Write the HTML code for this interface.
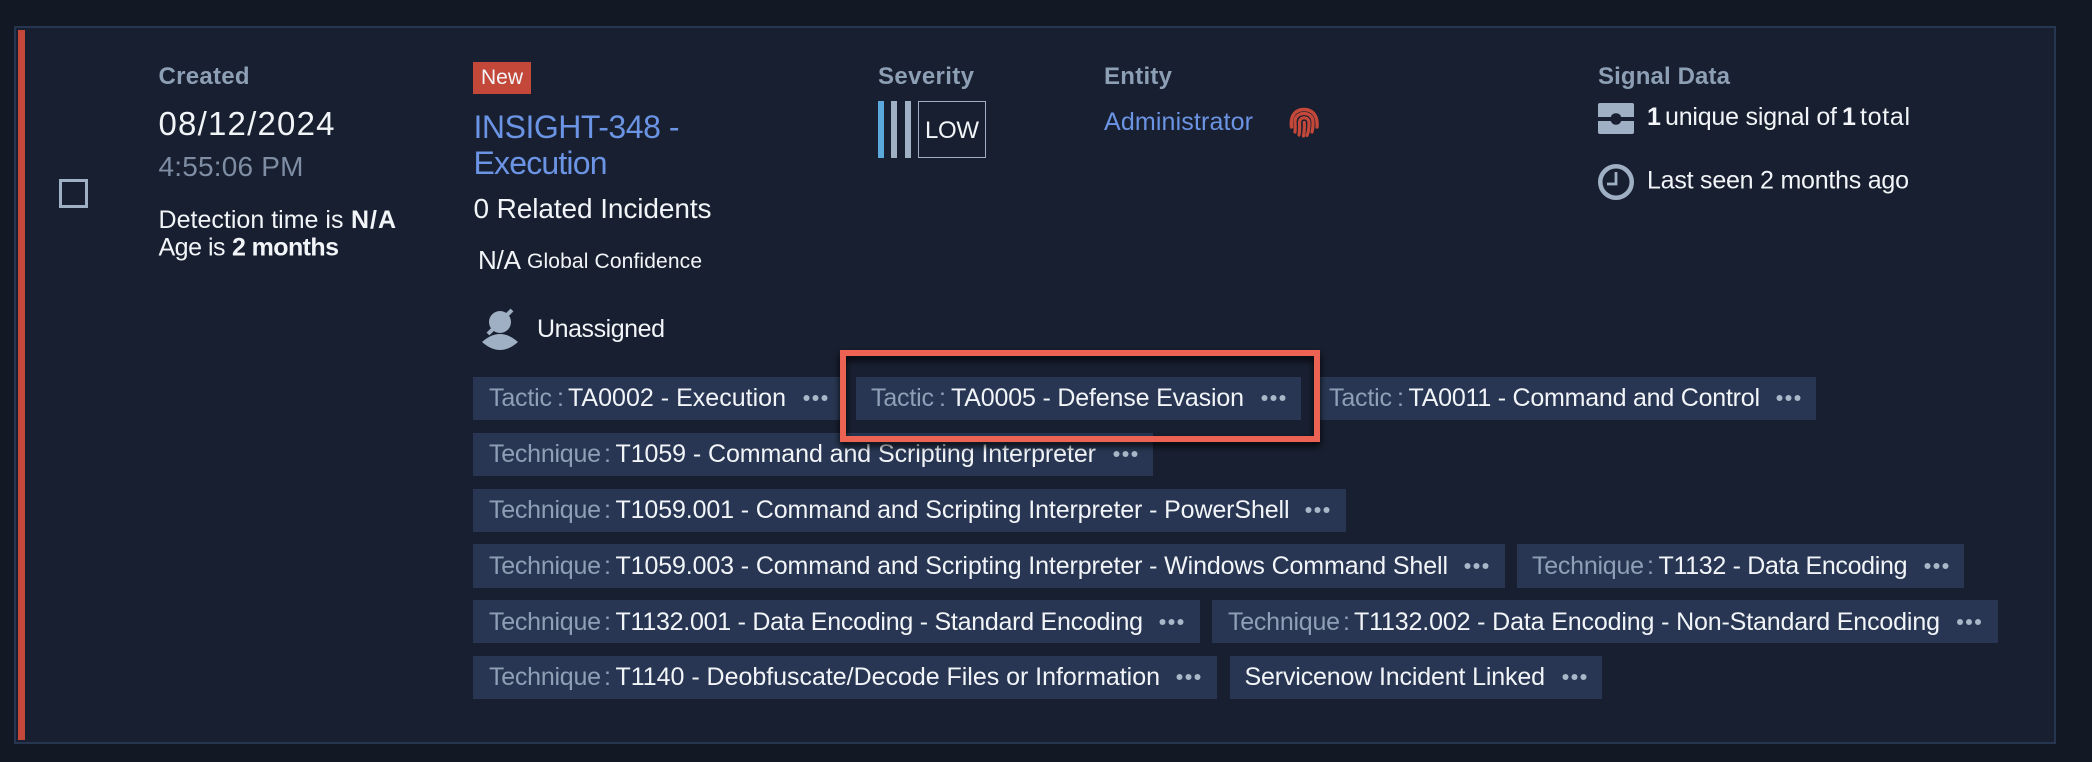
<!DOCTYPE html>
<html><head><meta charset="utf-8"><style>
html,body{margin:0;padding:0;background:#121925;width:2092px;height:762px;overflow:hidden}
svg{display:block;position:absolute;left:0;top:0}
text{font-family:"Liberation Sans",sans-serif;fill:#f2f5f8;white-space:pre}
.h{font-weight:700;font-size:24px;fill:#8d9fb5}
.k{font-size:25px;fill:#8f9fb5}
.v{font-size:25px;fill:#f2f5f8}
.c{fill:#283653}
.d{fill:#a9b7c8}
.l{fill:#6b94e4}
</style></head><body>
<svg width="2092" height="762" viewBox="0 0 2092 762" xmlns="http://www.w3.org/2000/svg">
<defs><filter id="sh" x="-5%" y="-20%" width="110%" height="140%"><feDropShadow dx="0" dy="4" stdDeviation="3.5" flood-color="#000" flood-opacity=".9"/></filter></defs>
<rect x="15" y="27" width="2040" height="716" fill="#181f30" stroke="#263650" stroke-width="2"/>
<rect x="18" y="30" width="7" height="710" fill="#c4483a"/>
<rect x="60.500" y="180.500" width="26" height="26" fill="none" stroke="#a0b0c4" stroke-width="3"/>

<text class="h" x="158.500" y="84" textLength="91">Created</text>
<text x="158.500" y="135" font-size="33" textLength="176">08/12/2024</text>
<text x="158.500" y="176" font-size="28" style="fill:#7e8da3" textLength="145">4:55:06 PM</text>
<text x="158.500" y="228" font-size="25" textLength="185">Detection time is</text>
<text x="351" y="228" font-size="25" font-weight="700" textLength="45">N/A</text>
<text x="158.500" y="255.500" font-size="25" textLength="67">Age is</text>
<text x="232" y="255.500" font-size="25" font-weight="700" textLength="107">2 months</text>

<rect x="473" y="62" width="58" height="32" fill="#c4483a"/>
<text x="481" y="84" font-size="21" textLength="42">New</text>
<text class="l" x="473.500" y="138" font-size="32" textLength="206">INSIGHT-348 -</text>
<text class="l" x="473.500" y="174" font-size="32" textLength="134">Execution</text>
<text x="473.500" y="218" font-size="28" textLength="238">0 Related Incidents</text>
<text x="478" y="269" font-size="26" textLength="43">N/A</text>
<text x="527" y="268" font-size="21" textLength="175">Global Confidence</text>
<g fill="#a0b0c4">
<circle cx="500" cy="322" r="11"/>
<path d="M482 342Q500 326 518 342Q500 358 482 342Z"/>
</g>
<path d="M488 334L512 310" stroke="#a0b0c4" stroke-width="4" fill="none"/>
<text x="537" y="337" font-size="25" textLength="128">Unassigned</text>

<text class="h" x="878" y="84" textLength="96">Severity</text>
<rect x="878" y="101" width="6" height="57" fill="#5aa8dc"/>
<rect x="891" y="101" width="6" height="57" fill="#9fb0c4"/>
<rect x="905" y="101" width="6" height="57" fill="#9fb0c4"/>
<rect x="918.500" y="101.500" width="67" height="56" fill="none" stroke="#a0b0c4" stroke-width="1"/>
<text x="925" y="138" font-size="24" textLength="54">LOW</text>

<text class="h" x="1104" y="84" textLength="68">Entity</text>
<text class="l" x="1104" y="130" font-size="25" textLength="149">Administrator</text>
<g fill="none" stroke="#c4483a" stroke-width="3.200" stroke-linecap="round">
<path d="M1291.500 127C1290 115 1296 109.500 1304 109.500C1312 109.500 1318 115 1317 127" stroke-width="3.400"/>
<path d="M1295 132C1295.500 128 1295 125 1295 122C1295 116.500 1299 113.500 1304 113.500C1309.500 113.500 1313 117 1313 122.500C1313 126 1313 129 1312 132"/>
<path d="M1299 135C1300 130 1299.500 126 1299.500 123C1299.500 120 1301 117.800 1304 117.800C1307.500 117.800 1309 120 1309 123C1309 128 1308.500 132 1307 135.500"/>
<path d="M1303.500 136C1304.500 131 1304.500 127 1304.300 122.500"/>
</g>

<text class="h" x="1598" y="84" textLength="132">Signal Data</text>
<path d="M1600 103H1632A2 2 0 0 1 1634 105V117H1621.200A5.500 5.500 0 0 0 1610.800 117H1598V105A2 2 0 0 1 1600 103Z" fill="#a0b0c4"/>
<path d="M1598 121H1610.800A5.500 5.500 0 0 0 1621.200 121H1634V132A2 2 0 0 1 1632 134H1600A2 2 0 0 1 1598 132Z" fill="#a0b0c4"/>
<text x="1647" y="125" font-size="25" font-weight="700" textLength="11">1</text>
<text x="1665" y="125" font-size="25" textLength="172">unique signal of</text>
<text x="1842" y="125" font-size="25" font-weight="700" textLength="11">1</text>
<text x="1860" y="125" font-size="25" textLength="50">total</text>
<circle cx="1616" cy="182" r="15.750" fill="none" stroke="#a0b0c4" stroke-width="4.500"/>
<path d="M1616 172V184H1607" fill="none" stroke="#a0b0c4" stroke-width="2.800"/>
<text x="1647" y="188.500" font-size="25" textLength="262">Last seen 2 months ago</text>

<!-- Row 1 -->
<rect class="c" x="473" y="377" width="369" height="43"/>
<text class="k" x="489" y="406" textLength="63">Tactic</text><text class="k" x="557" y="406">:</text><text class="v" x="568" y="406" textLength="218">TA0002 - Execution</text>
<g class="d"><circle cx="806.500" cy="398" r="3"/><circle cx="815.500" cy="398" r="3"/><circle cx="824.500" cy="398" r="3"/></g>
<rect class="c" x="856" y="377" width="445" height="43"/>
<text class="k" x="871" y="406" textLength="63">Tactic</text><text class="k" x="939" y="406">:</text><text class="v" x="951" y="406" textLength="293">TA0005 - Defense Evasion</text>
<g class="d"><circle cx="1264.500" cy="398" r="3"/><circle cx="1273.500" cy="398" r="3"/><circle cx="1282.500" cy="398" r="3"/></g>
<rect class="c" x="1316" y="377" width="500" height="43"/>
<text class="k" x="1329" y="406" textLength="63">Tactic</text><text class="k" x="1397" y="406">:</text><text class="v" x="1408.500" y="406" textLength="351.500">TA0011 - Command and Control</text>
<g class="d"><circle cx="1779.500" cy="398" r="3"/><circle cx="1788.500" cy="398" r="3"/><circle cx="1797.500" cy="398" r="3"/></g>
<!-- Row 2 -->
<rect class="c" x="473" y="433" width="680" height="43"/>
<text class="k" x="489" y="462" textLength="112">Technique</text><text class="k" x="604" y="462">:</text><text class="v" x="615.500" y="462" textLength="480.500">T1059 - Command and Scripting Interpreter</text>
<g class="d"><circle cx="1116.500" cy="454" r="3"/><circle cx="1125.500" cy="454" r="3"/><circle cx="1134.500" cy="454" r="3"/></g>
<!-- Row 3 -->
<rect class="c" x="473" y="489" width="873" height="43"/>
<text class="k" x="489" y="518" textLength="112">Technique</text><text class="k" x="604" y="518">:</text><text class="v" x="615.500" y="518" textLength="674">T1059.001 - Command and Scripting Interpreter - PowerShell</text>
<g class="d"><circle cx="1308.500" cy="510" r="3"/><circle cx="1317.500" cy="510" r="3"/><circle cx="1326.500" cy="510" r="3"/></g>
<!-- Row 4 -->
<rect class="c" x="473" y="544" width="1032" height="44"/>
<text class="k" x="489" y="574" textLength="112">Technique</text><text class="k" x="604" y="574">:</text><text class="v" x="615.500" y="574" textLength="832.500">T1059.003 - Command and Scripting Interpreter - Windows Command Shell</text>
<g class="d"><circle cx="1467.500" cy="566" r="3"/><circle cx="1476.500" cy="566" r="3"/><circle cx="1485.500" cy="566" r="3"/></g>
<rect class="c" x="1517" y="544" width="447" height="44"/>
<text class="k" x="1532" y="574" textLength="112">Technique</text><text class="k" x="1647" y="574">:</text><text class="v" x="1658.500" y="574" textLength="249">T1132 - Data Encoding</text>
<g class="d"><circle cx="1927.500" cy="566" r="3"/><circle cx="1936.500" cy="566" r="3"/><circle cx="1945.500" cy="566" r="3"/></g>
<!-- Row 5 -->
<rect class="c" x="473" y="600" width="727" height="43"/>
<text class="k" x="489" y="630" textLength="112">Technique</text><text class="k" x="604" y="630">:</text><text class="v" x="615.500" y="630" textLength="527.500">T1132.001 - Data Encoding - Standard Encoding</text>
<g class="d"><circle cx="1162.500" cy="622" r="3"/><circle cx="1171.500" cy="622" r="3"/><circle cx="1180.500" cy="622" r="3"/></g>
<rect class="c" x="1212" y="600" width="786" height="43"/>
<text class="k" x="1228" y="630" textLength="112">Technique</text><text class="k" x="1343" y="630">:</text><text class="v" x="1354" y="630" textLength="586">T1132.002 - Data Encoding - Non-Standard Encoding</text>
<g class="d"><circle cx="1960" cy="622" r="3"/><circle cx="1969" cy="622" r="3"/><circle cx="1978" cy="622" r="3"/></g>
<!-- Row 6 -->
<rect class="c" x="473" y="656" width="744" height="43"/>
<text class="k" x="489" y="685" textLength="112">Technique</text><text class="k" x="604" y="685">:</text><text class="v" x="615.500" y="685" textLength="544.500">T1140 - Deobfuscate/Decode Files or Information</text>
<g class="d"><circle cx="1179.500" cy="677" r="3"/><circle cx="1188.500" cy="677" r="3"/><circle cx="1197.500" cy="677" r="3"/></g>
<rect class="c" x="1230" y="656" width="372" height="43"/>
<text class="v" x="1244.500" y="685" textLength="300.500">Servicenow Incident Linked</text>
<g class="d"><circle cx="1565.500" cy="677" r="3"/><circle cx="1574.500" cy="677" r="3"/><circle cx="1583.500" cy="677" r="3"/></g>

<!-- Highlight box -->
<rect x="843" y="353" width="474" height="86" fill="none" stroke="#ed6352" stroke-width="6" filter="url(#sh)"/>
</svg>
</body></html>
